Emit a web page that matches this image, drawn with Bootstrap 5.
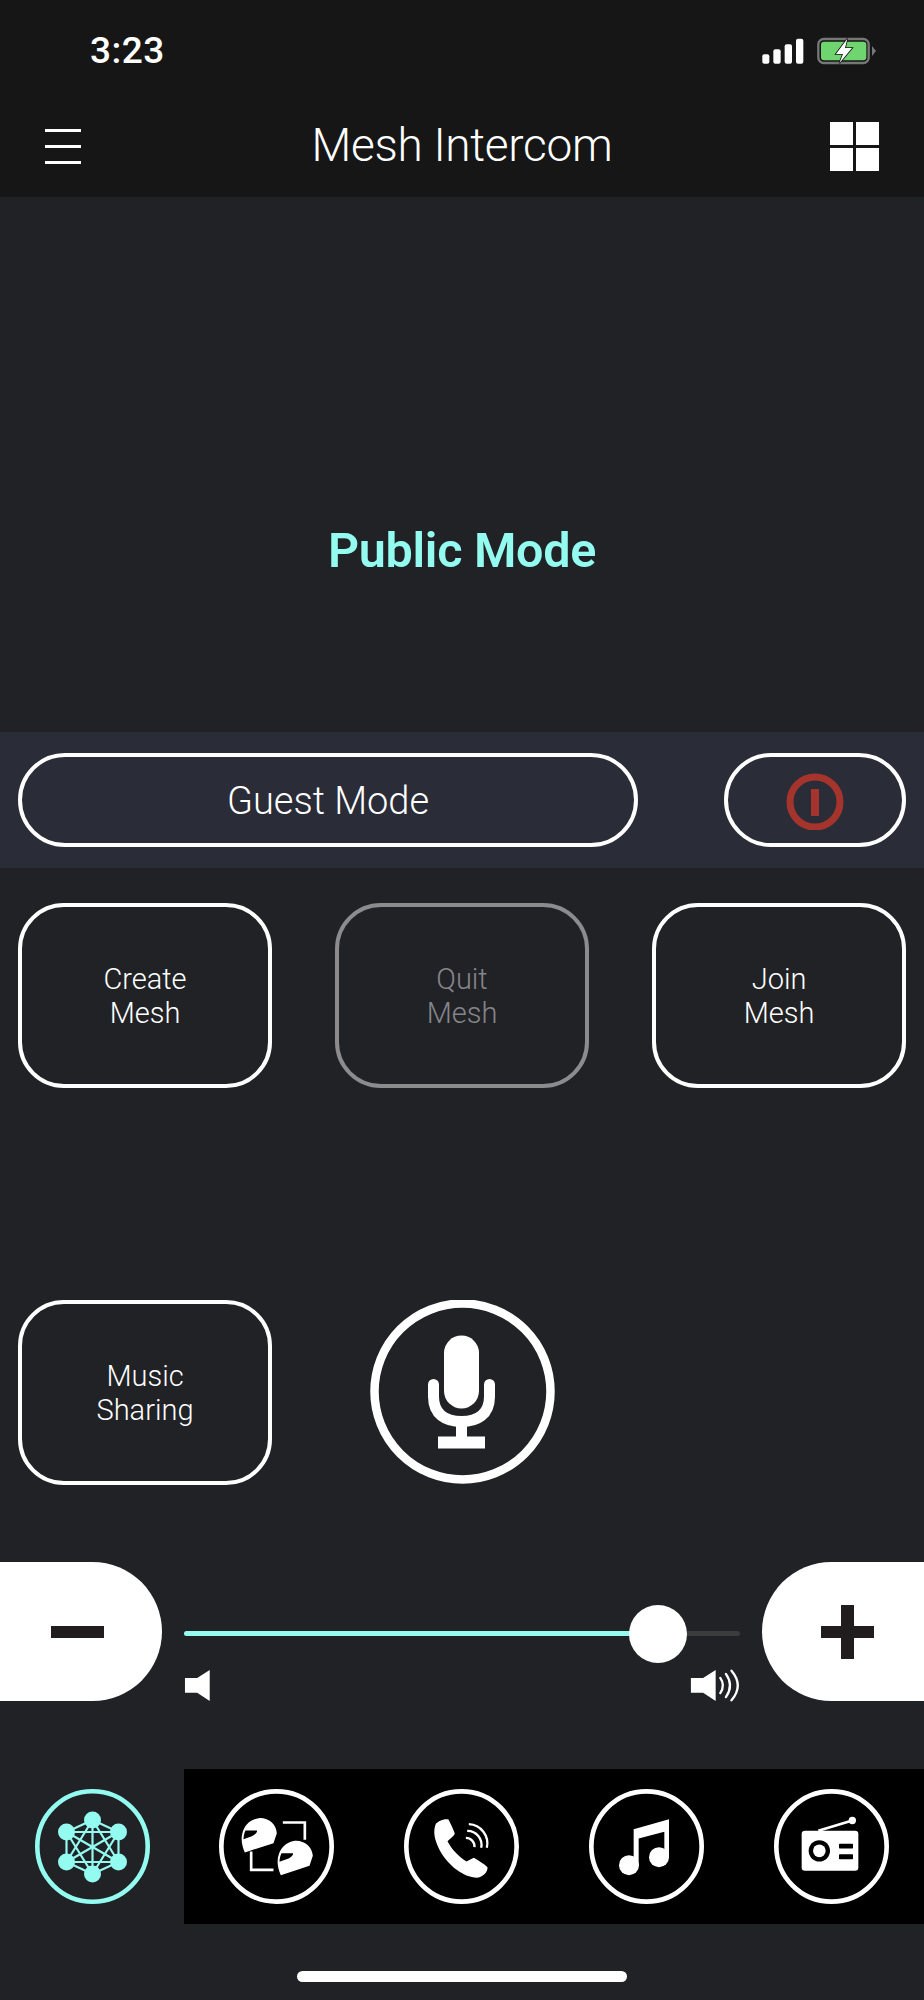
<!DOCTYPE html>
<html lang="en">
<head>
  <meta charset="UTF-8" />
  <meta name="viewport" content="width=device-width, initial-scale=1.0" />
  <title>Mesh Intercom</title>
  <link href="https://cdn.jsdelivr.net/npm/bootstrap@5.3.0/dist/css/bootstrap.min.css" rel="stylesheet">
  <style>
    body {
      background-color: #212226;
      color: #fff;
      font-family: Roboto, "Liberation Sans", sans-serif;
      font-weight: 300;
    }

    .app-screen {
      width: 924px;
      height: 2000px;
      overflow: hidden;
    }

    .top-bar {
      background: #161616;
      height: 197px;
    }

    .status-row {
      height: 100px;
      padding: 2px 45px 0 90px;
    }

    .status-time {
      font-size: 37px;
      font-weight: 500;
      letter-spacing: 0.5px;
    }

    .title-row {
      height: 93px;
      --bs-navbar-padding-x: 45px;
      --bs-navbar-padding-y: 0;
    }

    .title-text {
      font-size: 46px;
      letter-spacing: -0.3px;
      line-height: 1;
    }

    .side-slot {
      width: 49px;
      row-gap: 13px;
    }

    .burger-line {
      width: 36px;
      height: 3px;
      background: #fff;
    }

    .grid-icon {
      display: grid;
      grid-template-columns: 1fr 1fr;
      gap: 3px;
      width: 49px;
      height: 49px;
    }

    .grid-icon span {
      background: #fff;
    }

    .hero-area {
      height: 535px;
      padding-top: 173px;
    }

    .mode-title {
      color: #93fbf0;
      font-size: 48.5px;
      font-weight: 600;
      letter-spacing: -0.3px;
    }

    .guest-band {
      background: #2a2c38;
      height: 136px;
      padding: 0 18px;
    }

    .outline-btn.btn {
      --bs-btn-color: #fff;
      --bs-btn-border-color: #fff;
      --bs-btn-border-width: 4px;
      --bs-btn-padding-x: 0;
      --bs-btn-padding-y: 0;
      --bs-btn-font-weight: 300;
      background: transparent;
    }

    .guest-btn {
      width: 620px;
      height: 94px;
      font-size: 38px;
      padding-top: 2px;
      border-radius: 47px;
    }

    .power-btn {
      width: 182px;
      height: 94px;
      border-radius: 47px;
    }

    .mesh-row {
      padding: 0 18px;
    }

    .mesh-btn {
      width: 254px;
      height: 185px;
      font-size: 29px;
      line-height: 34px;
      padding-top: 1px;
      border-radius: 46px;
    }

    .mesh-btn.is-off {
      --bs-btn-color: #85858a;
      --bs-btn-border-color: #8c8c8e;
      --bs-btn-disabled-color: #85858a;
      --bs-btn-disabled-border-color: #8c8c8e;
      --bs-btn-disabled-opacity: 1;
    }

    .row-one {
      margin-top: 35px;
    }

    .row-two {
      margin-top: 212px;
    }

    .mic-slot {
      width: 254px;
    }

    .vol-row {
      margin-top: 77px;
      height: 139px;
    }

    .vol-btn {
      width: 162px;
      height: 139px;
      background: #fff;
    }

    .vol-minus {
      border-radius: 0 70px 70px 0;
    }

    .vol-plus {
      border-radius: 70px 0 0 70px;
    }

    .vol-mid {
      padding: 69px 22px 0;
    }

    .vol-track {
      height: 5px;
      background: #3b3c3e;
    }

    .vol-track .progress-bar {
      background: #93fbf0;
    }

    .vol-thumb {
      position: absolute;
      top: 2.5px;
      width: 58px;
      height: 58px;
      background: #fff;
      border-radius: 50%;
      transform: translate(-50%, -50%);
    }

    .vol-icons {
      margin-top: 33px;
    }

    .tab-row {
      margin-top: 68px;
      height: 155px;
    }

    .tab-cell {
      width: 185px;
    }

    .tab-strip {
      background: #000;
    }

    .home-bar {
      width: 330px;
      height: 11px;
      margin: 47px auto 0;
      background: #fff;
      border-radius: 6px;
    }
  </style>
</head>
<body>
  <div class="app-screen d-flex flex-column">

    <div class="top-bar">
      <div class="status-row d-flex justify-content-between align-items-center">
        <span class="status-time">3:23</span>
        <div class="d-flex align-items-center">
          <svg width="47" height="30" viewBox="30 30 141 90">
            <rect x="37" y="85" width="21" height="28" rx="6" fill="#fff"/>
            <rect x="70" y="70" width="22" height="43" rx="6" fill="#fff"/>
            <rect x="104" y="55" width="22" height="58" rx="6" fill="#fff"/>
            <rect x="138" y="38" width="22" height="75" rx="6" fill="#fff"/>
          </svg>
          <svg width="64" height="30" viewBox="195 30 192 90" class="ms-2">
            <rect x="205" y="39" width="151" height="72" rx="16" fill="none" stroke="#777" stroke-width="7"/>
            <rect x="213" y="47" width="136" height="56" rx="9" fill="#6fd56f"/>
            <path d="M366 60 L378 75 L366 90Z" fill="#777"/>
            <path d="M292 38 L258 84 H279 L268 112 L306 66 H285Z" fill="#fff" stroke="#161616" stroke-width="5" paint-order="stroke"/>
          </svg>
        </div>
      </div>
      <nav class="title-row navbar flex-nowrap">
        <div class="side-slot d-flex flex-column">
          <div class="burger-line"></div>
          <div class="burger-line"></div>
          <div class="burger-line"></div>
        </div>
        <span class="title-text mb-1">Mesh Intercom</span>
        <div class="grid-icon"><span></span><span></span><span></span><span></span></div>
      </nav>
    </div>

    <div class="hero-area d-flex align-items-center justify-content-center">
      <span class="mode-title">Public Mode</span>
    </div>

    <div class="guest-band d-flex justify-content-between align-items-center">
      <button class="btn outline-btn guest-btn">Guest Mode</button>
      <button class="btn outline-btn power-btn d-flex align-items-center justify-content-center">
        <svg width="60" height="60" viewBox="0 0 60 60">
          <circle cx="30" cy="32" r="25" fill="none" stroke="#a5352c" stroke-width="7"/>
          <rect x="26" y="19" width="8" height="27" fill="#a5352c"/>
        </svg>
      </button>
    </div>

    <div class="mesh-row row-one d-flex justify-content-between">
      <button class="btn outline-btn mesh-btn">Create<br>Mesh</button>
      <button class="btn outline-btn mesh-btn is-off" disabled>Quit<br>Mesh</button>
      <button class="btn outline-btn mesh-btn">Join<br>Mesh</button>
    </div>

    <div class="mesh-row row-two d-flex justify-content-between">
      <button class="btn outline-btn mesh-btn">Music<br>Sharing</button>
      <div class="mic-slot d-flex justify-content-center">
        <svg width="185" height="185" viewBox="30.5 20.5 185 185">
          <circle cx="123" cy="112" r="88" fill="none" stroke="#fff" stroke-width="8.5"/>
          <rect x="104.5" y="56" width="35" height="73" rx="17.5" fill="#fff"/>
          <path d="M94 105 V117 C94 135 106 142 122 142 C138 142 150 135 150 117 V105" fill="none" stroke="#fff" stroke-width="11" stroke-linecap="round"/>
          <rect x="116.5" y="141" width="11" height="18" fill="#fff"/>
          <rect x="98.5" y="157" width="47" height="12" fill="#fff"/>
        </svg>
      </div>
      <div class="mic-slot"></div>
    </div>

    <div class="vol-row d-flex">
      <button class="btn vol-btn vol-minus p-0 border-0 flex-shrink-0 d-flex align-items-center justify-content-center">
        <svg width="53" height="12" viewBox="0 0 53 12" class="me-2"><rect width="53" height="12" fill="#211d1e"/></svg>
      </button>
      <div class="vol-mid flex-grow-1">
        <div class="position-relative">
          <div class="progress vol-track rounded-pill">
            <div class="progress-bar" style="width: 85.2%"></div>
          </div>
          <div class="vol-thumb" style="left: 85.2%"></div>
        </div>
        <div class="vol-icons d-flex justify-content-between">
          <svg width="27" height="33" viewBox="33 25 80 100">
            <path d="M35 52 H72 L110 28 V122 L72 97 H35Z" fill="#fff"/>
          </svg>
          <svg width="50" height="33" viewBox="33 25 150 100">
            <path d="M35 52 H72 L110 28 V122 L72 97 H35Z" fill="#fff"/>
            <g fill="none" stroke="#fff" stroke-width="7" stroke-linecap="round">
              <path d="M124 52 Q140 75 124 98"/>
              <path d="M141 40 Q166 75 141 110"/>
              <path d="M158 30 Q196 75 158 120"/>
            </g>
          </svg>
        </div>
      </div>
      <button class="btn vol-btn vol-plus p-0 border-0 flex-shrink-0 d-flex align-items-center justify-content-center">
        <svg width="53" height="54" viewBox="0 0 53 54" class="ms-2">
          <rect x="0" y="21" width="53" height="12" fill="#211d1e"/>
          <rect x="20" y="0" width="13" height="54" fill="#211d1e"/>
        </svg>
      </button>
    </div>

    <div class="tab-row d-flex">
      <div class="tab-cell d-flex align-items-center justify-content-center">
        <svg width="115" height="115" viewBox="0 0 115 115">
          <circle cx="57.5" cy="57.5" r="55.2" fill="none" stroke="#93fbf0" stroke-width="4.6"/>
          <g stroke="#93fbf0" stroke-width="2.2">
            <path d="M57.5 31 L31.5 43 M57.5 31 L83.5 43 M57.5 31 L31.5 73 M57.5 31 L83.5 73 M57.5 31 V85"/>
            <path d="M31.5 43 H83.5 M31.5 43 V73 M31.5 43 L83.5 73 M31.5 43 L57.5 85"/>
            <path d="M83.5 43 L31.5 73 M83.5 43 V73 M83.5 43 L57.5 85"/>
            <path d="M31.5 73 H83.5 M31.5 73 L57.5 85 M83.5 73 L57.5 85"/>
          </g>
          <g fill="#93fbf0">
            <circle cx="57.5" cy="31" r="8.5"/>
            <circle cx="31.5" cy="43" r="8.5"/>
            <circle cx="83.5" cy="43" r="8.5"/>
            <circle cx="31.5" cy="73" r="8.5"/>
            <circle cx="83.5" cy="73" r="8.5"/>
            <circle cx="57.5" cy="85" r="8.5"/>
          </g>
        </svg>
      </div>
      <div class="tab-strip flex-grow-1 d-flex">
        <div class="tab-cell d-flex align-items-center justify-content-center">
          <svg width="115" height="115" viewBox="58.5 52.5 345 345">
            <circle cx="231" cy="225" r="165.5" fill="none" stroke="#fff" stroke-width="14"/>
            <path d="M250 153 H316 V205 M155 240 V295 H222" fill="none" stroke="#fff" stroke-width="8"/>
            <path d="M136 243 C128 225 124 205 128 188 C133 163 150 144 178 140 C207 138 230 158 232 185 L222 215Z" fill="#fff"/>
            <path d="M138 177 H172 C175 181 167 189 157 194 L132 203 C132 194 134 185 138 177Z" fill="#000"/>
            <g transform="translate(108 68)">
              <path d="M136 243 C128 225 124 205 128 188 C133 163 150 144 178 140 C207 138 230 158 232 185 L222 215Z" fill="#fff"/>
              <path d="M138 177 H172 C175 181 167 189 157 194 L132 203 C132 194 134 185 138 177Z" fill="#000"/>
            </g>
          </svg>
        </div>
        <div class="tab-cell d-flex align-items-center justify-content-center">
          <svg width="115" height="115" viewBox="12.5 20.5 345 345">
            <circle cx="185" cy="193" r="165.5" fill="none" stroke="#fff" stroke-width="14"/>
            <path d="M108 125 C116 116 134 108 146 112 C152 124 160 140 165 155 C160 165 150 170 143 177 C155 200 175 222 200 238 C208 234 215 230 222 227 C235 235 252 245 263 255 C264 268 252 283 232 287 C190 285 145 250 120 205 C105 175 98 150 108 125Z" fill="#fff"/>
            <g fill="none" stroke="#fff" stroke-width="7">
              <path d="M207 126 A58 58 0 0 1 261 197"/>
              <path d="M202 146 A42 42 0 0 1 244 197"/>
              <path d="M198 167 A26 26 0 0 1 224 195"/>
            </g>
          </svg>
        </div>
        <div class="tab-cell d-flex align-items-center justify-content-center">
          <svg width="115" height="115" viewBox="382 82.5 345 345">
            <circle cx="554.5" cy="255" r="165.5" fill="none" stroke="#fff" stroke-width="14"/>
            <path d="M516 203 L622 173 V288 H608 V211 L531 231 V312 H516Z" fill="#fff"/>
            <circle cx="592" cy="287" r="30" fill="#fff"/>
            <circle cx="502" cy="311" r="30" fill="#fff"/>
          </svg>
        </div>
        <div class="tab-cell d-flex align-items-center justify-content-center">
          <svg width="115" height="115" viewBox="-48 -52.5 345 345">
            <circle cx="124.5" cy="120" r="165.5" fill="none" stroke="#fff" stroke-width="14"/>
            <rect x="35" y="73" width="170" height="120" rx="10" fill="#fff"/>
            <path d="M85 73 L187 42" stroke="#fff" stroke-width="8"/>
            <circle cx="187" cy="42" r="11" fill="#fff"/>
            <circle cx="88" cy="133" r="32" fill="#000"/>
            <circle cx="88" cy="133" r="19" fill="#fff"/>
            <rect x="147" y="112" width="42" height="14" rx="2" fill="#000"/>
            <rect x="147" y="143" width="42" height="15" rx="2" fill="#000"/>
          </svg>
        </div>
      </div>
    </div>

    <div class="home-bar"></div>
  </div>

  <script src="https://cdn.jsdelivr.net/npm/bootstrap@5.3.0/dist/js/bootstrap.bundle.min.js"></script>
</body>
</html>
